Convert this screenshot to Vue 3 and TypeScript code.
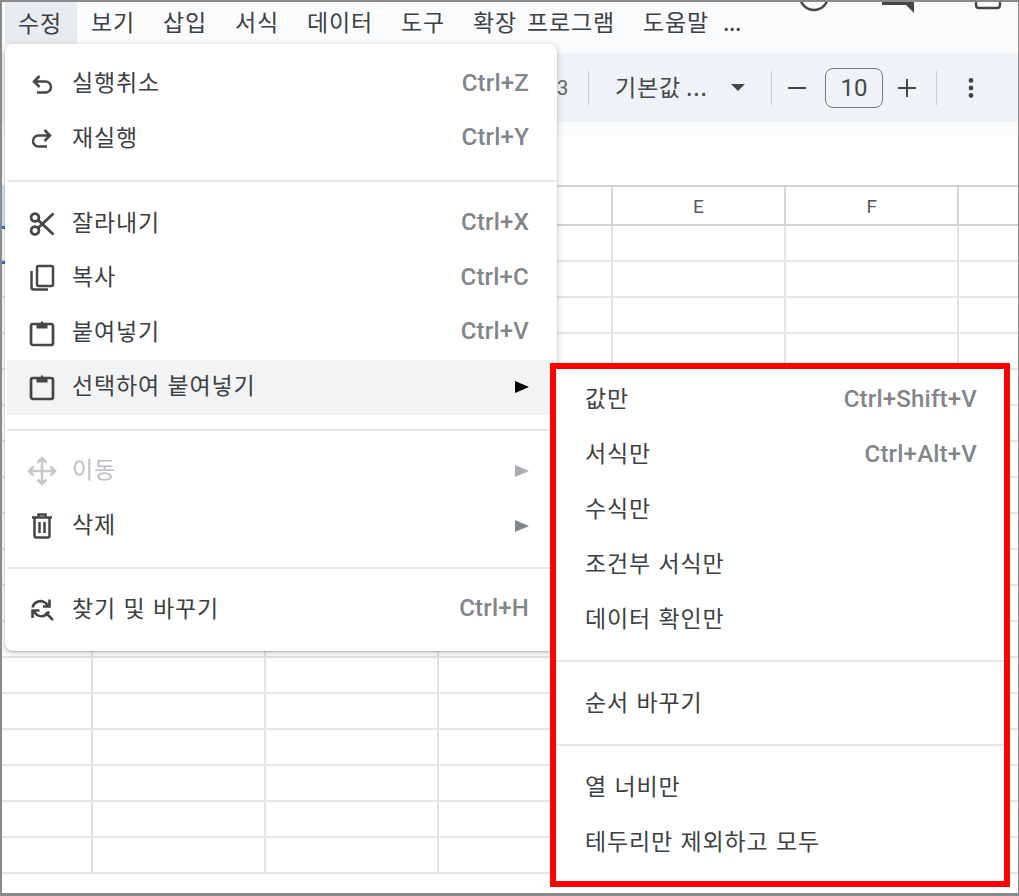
<script setup lang="ts">
interface Item { label?: string; key?: string; icon?: string; arrow?: boolean; disabled?: boolean; active?: boolean; sep?: boolean; tight?: boolean }

const menus: string[] = ['보기', '삽입', '서식', '데이터', '도구', '확장 프로그램', '도움말', '...']
// Columns B to D sit under the open menu, so only E and F are visible.
const columns: string[] = ['', '', '', 'E', 'F']
const rowCount = 18

const items: Item[] = [
  { label: '실행취소', key: 'Ctrl+Z', icon: 'undo' },
  { label: '재실행', key: 'Ctrl+Y', icon: 'redo' },
  { sep: true },
  { label: '잘라내기', key: 'Ctrl+X', icon: 'cut' },
  { label: '복사', key: 'Ctrl+C', icon: 'copy' },
  { label: '붙여넣기', key: 'Ctrl+V', icon: 'paste' },
  { label: '선택하여 붙여넣기', icon: 'paste', arrow: true, active: true },
  { sep: true, tight: true },
  { label: '이동', icon: 'move', arrow: true, disabled: true },
  { label: '삭제', icon: 'trash', arrow: true },
  { sep: true },
  { label: '찾기 및 바꾸기', key: 'Ctrl+H', icon: 'find' },
]

const subItems: Item[] = [
  { label: '값만', key: 'Ctrl+Shift+V' },
  { label: '서식만', key: 'Ctrl+Alt+V' },
  { label: '수식만' },
  { label: '조건부 서식만' },
  { label: '데이터 확인만' },
  { sep: true },
  { label: '순서 바꾸기' },
  { sep: true },
  { label: '열 너비만' },
  { label: '테두리만 제외하고 모두' },
]
</script>

<template>
  <div class="frame">
    <div class="top-icons">
      <svg class="ti ti-a" width="34" height="14" viewBox="0 0 34 14"><circle cx="17" cy="-6" r="14" fill="none" stroke="#444746" stroke-width="2.4" /></svg>
      <svg class="ti ti-b" width="36" height="14" viewBox="0 0 36 14"><path d="M2 0V3H26L34 11V0" fill="#444746" /></svg>
      <svg class="ti ti-c" width="30" height="14" viewBox="0 0 30 14"><path d="M2 0V3Q2 6 5 6H23Q26 6 26 3V0" fill="none" stroke="#444746" stroke-width="2.4" /></svg>
    </div>

    <nav class="menubar">
      <span class="mb-item mb-open">수정</span>
      <span v-for="m in menus" :key="m" class="mb-item">{{ m }}</span>
    </nav>

    <div class="toolbar-wrap">
      <div class="toolbar">
        <span class="tb-num">3</span>
        <i class="tb-sep"></i>
        <span class="tb-font">기본값 ...</span>
        <svg class="tb-caret" width="14" height="7" viewBox="0 0 14 7"><path d="M0 0H14L7 7Z" fill="#444746" /></svg>
        <i class="tb-sep"></i>
        <svg class="tb-minus" width="18" height="18" viewBox="0 0 18 18"><path d="M0 9H18" stroke="#444746" stroke-width="2" /></svg>
        <span class="tb-size">10</span>
        <svg class="tb-plus" width="18" height="18" viewBox="0 0 18 18"><path d="M0 9H18M9 0V18" stroke="#444746" stroke-width="2" /></svg>
        <i class="tb-sep"></i>
        <svg class="tb-more" width="6" height="22" viewBox="0 0 6 22"><circle cx="3" cy="3.5" r="2.4" fill="#444746" /><circle cx="3" cy="11" r="2.4" fill="#444746" /><circle cx="3" cy="18.5" r="2.4" fill="#444746" /></svg>
      </div>
    </div>

    <div class="formula-strip"></div>
    <div class="formula"></div>

    <div class="grid">
      <div class="head-row">
        <div class="corner"></div>
        <div v-for="(c, i) in columns" :key="i" class="head-cell">{{ c }}</div>
        <div class="tail"></div>
      </div>
      <div v-for="r in rowCount" :key="r" class="row">
        <div class="corner"></div>
        <div v-for="(c, i) in columns" :key="i" class="cell"></div>
        <div class="tail"></div>
      </div>
    </div>

    <i class="selection"></i>
    <i class="sel-dot sel-dot-1"></i>
    <i class="sel-dot sel-dot-2"></i>

    <div class="menu">
      <template v-for="(it, i) in items" :key="i">
        <div v-if="it.sep" class="sep" :class="{ tight: it.tight }"></div>
        <div v-else class="item" :class="{ active: it.active, disabled: it.disabled }">
          <span class="icon">
            <svg v-if="it.icon === 'undo'" width="22" height="21" viewBox="0 0 22 21"><path d="M8.500 2 3 7.500 8.500 13M3.500 7.500H14.500a5.400 5.400 0 0 1 0 11H6" fill="none" stroke="currentColor" stroke-width="2.500" /></svg>
            <svg v-else-if="it.icon === 'redo'" width="22" height="21" viewBox="0 0 22 21"><path d="M13.500 2 19 7.500 13.500 13M18.500 7.500H7.500a5.400 5.400 0 0 0 0 11H16" fill="none" stroke="currentColor" stroke-width="2.500" /></svg>
            <svg v-else-if="it.icon === 'cut'" width="26" height="26" viewBox="0 0 26 26"><circle cx="6" cy="6.500" r="3.900" fill="none" stroke="currentColor" stroke-width="2.800" /><circle cx="6" cy="19.500" r="3.900" fill="none" stroke="currentColor" stroke-width="2.800" /><path d="M9 9 24.500 23.500M9 17 24.500 2.500" fill="none" stroke="currentColor" stroke-width="2.800" /></svg>
            <svg v-else-if="it.icon === 'copy'" width="26" height="28" viewBox="0 0 26 28"><rect x="8" y="2" width="16" height="20" rx="1.500" fill="none" stroke="currentColor" stroke-width="2.500" /><path d="M2.500 7v16.500A2 2 0 0 0 4.500 25.500H19" fill="none" stroke="currentColor" stroke-width="2.500" /></svg>
            <svg v-else-if="it.icon === 'paste'" width="26" height="28" viewBox="0 0 26 28"><rect x="2" y="5" width="22" height="21" rx="2" fill="none" stroke="currentColor" stroke-width="2.700" /><path d="M7.500 9.500V5h3.500l2-3.500 2 3.500h3.500v4.500Z" fill="currentColor" /></svg>
            <svg v-else-if="it.icon === 'move'" width="32" height="32" viewBox="0 0 32 32"><path d="M16 3v26M3 16h26M11.500 7.500 16 3l4.500 4.500M11.500 24.500 16 29l4.500-4.500M7.500 11.500 3 16l4.500 4.500M24.500 11.500 29 16l-4.500 4.500" fill="none" stroke="currentColor" stroke-width="2.600" /></svg>
            <svg v-else-if="it.icon === 'trash'" width="22" height="26" viewBox="0 0 22 26"><path d="M1 4.500H21M7.500 4.500V1.500h7v3M3.500 4.500V22.500Q3.500 24.500 5.500 24.500H16.500Q18.500 24.500 18.500 22.500V4.500M8.500 9V20M13.500 9V20" fill="none" stroke="currentColor" stroke-width="2.500" /></svg>
            <svg v-else-if="it.icon === 'find'" width="25" height="25" viewBox="0 0 25 25"><path d="M2.500 10.500C4 5 10 2.500 15 5.500L19 9M19.500 2.500V9.500H13M19 14.500C17 19 11 20.500 7 18L3 14M2.500 21V13.500H9.500M15.500 15.500 23 23" fill="none" stroke="currentColor" stroke-width="2.600" /></svg>
          </span>
          <span class="label">{{ it.label }}</span>
          <span v-if="it.key" class="key">{{ it.key }}</span>
          <span v-if="it.arrow" class="arrow"></span>
        </div>
      </template>
    </div>

    <div class="submenu">
      <template v-for="(it, i) in subItems" :key="i">
        <div v-if="it.sep" class="sub-sep"></div>
        <div v-else class="sub-item">
          <span class="label">{{ it.label }}</span>
          <span v-if="it.key" class="key">{{ it.key }}</span>
        </div>
      </template>
    </div>
  </div>
</template>

<style scoped>
.frame {
  position: relative;
  box-sizing: border-box;
  width: 1019px;
  height: 896px;
  overflow: hidden;
  background: #fff;
  border: 2px solid #8a8a8a;
  border-right-width: 1px;
  border-bottom-width: 3px;
  font-family: "Noto Sans CJK KR", "Liberation Sans", sans-serif;
  color: #3c4043;
}

.top-icons { position: absolute; top: 0; left: 0; width: 100%; height: 14px; }
.ti { position: absolute; top: 0; }
.ti-a { left: 795px; }
.ti-b { left: 878px; }
.ti-c { left: 972px; }

.menubar {
  display: flex;
  align-items: center;
  height: 42px;
  padding-left: 3px;
  background: #f9fbfd;
  font-size: 23px;
  letter-spacing: 0.84px;
  word-spacing: 4px;
  color: #3c4043;
}
.mb-item { display: flex; align-items: center; height: 100%; padding: 0 14px 4px; white-space: nowrap; }
.mb-item:last-child { margin-left: -14px; letter-spacing: -0.4px; }
.mb-open { background: #e9ecef; padding: 2px 15px 4px 13px; box-sizing: border-box; }

.toolbar-wrap { height: 78px; background: #f9fbfd; padding-top: 9px; box-sizing: border-box; }
.toolbar {
  display: flex;
  align-items: center;
  height: 69px;
  padding-left: 555px;
  background: #eff3f8;
  color: #444746;
  box-sizing: border-box;
}
.tb-num { font: 20px "Roboto", sans-serif; color: #5f6368; width: 12px; margin-right: 19px; }
.tb-sep { width: 1px; height: 34px; background: #c7cbd0; flex: none; }
.tb-font { font-size: 23px; letter-spacing: 0.84px; word-spacing: -1px; margin-left: 26px; width: 104px; white-space: nowrap; margin-top: -4px; }
.tb-caret { margin-left: 12px; margin-right: 26px; }
.tb-minus { margin-left: 16px; }
.tb-size {
  box-sizing: border-box;
  width: 58px;
  height: 40px;
  margin-left: 19px;
  border: 1.500px solid #747775;
  border-radius: 8px;
  display: flex;
  align-items: center;
  justify-content: center;
  font: 24px "Roboto", sans-serif;
}
.tb-plus { margin-left: 15px; margin-right: 20px; }
.tb-more { margin-left: 31px; }

.formula-strip { height: 14px; background: #f9fbfd; }
.formula { height: 49px; background: #fff; }

.grid { display: flex; flex-direction: column; }
.head-row, .row { display: flex; }
.head-row { height: 41px; border-top: 2px solid #d0d2d4; border-bottom: 2px solid #d0d2d4; box-sizing: border-box; }
.row { height: 36px; border-bottom: 2px solid #e4e5e6; box-sizing: border-box; }
.corner { width: 88.500px; flex: none; border-right: 2px solid #e0e1e2; }
.head-cell, .cell { width: 171.400px; flex: none; border-right: 2px solid #e2e3e4; }
.head-cell {
  display: flex;
  align-items: center;
  justify-content: center;
  padding-top: 1px;
  box-sizing: content-box;
  font: 400 19px "Roboto", sans-serif;
  color: #555a5e;
  border-right-color: #d6d7d8;
}
.tail { flex: 1; }

.selection { position: absolute; left: 0; top: 183px; width: 3px; height: 41px; background: #d3e3fd; }
.sel-dot { position: absolute; left: 0; width: 3px; height: 3px; background: #1a73e8; }
.sel-dot-1 { top: 224px; }
.sel-dot-2 { top: 259px; }

.menu {
  position: absolute;
  left: 3px;
  top: 42px;
  box-sizing: border-box;
  width: 552px;
  height: 607px;
  padding-top: 13px;
  background: #fff;
  border-radius: 8px;
  box-shadow: 0 2px 6px 2px rgba(60, 64, 67, 0.15), 0 1px 2px rgba(60, 64, 67, 0.3);
}
.item {
  display: flex;
  align-items: center;
  height: 54.500px;
  margin-left: 2px;
  padding: 0 28px 0 0;
  font-size: 23px;
  letter-spacing: 0.84px;
  word-spacing: 1.5px;
  color: #3c4043;
}
.item.active { background: #f1f3f4; }
.item.disabled { color: #bdc1c6; }
.icon { width: 65px; flex: none; display: flex; justify-content: center; padding-left: 5px; box-sizing: border-box; color: #444746; }
.disabled .icon { color: #c6c8ca; }
.label { white-space: pre; flex: 1; margin-top: -6px; }
.key {
  font: 500 24px "Roboto", sans-serif;
  letter-spacing: 0.2px;
  word-spacing: 0;
  color: #80868b;
  white-space: nowrap;
  margin-top: -3px;
}
.arrow {
  width: 0;
  height: 0;
  border-left: 14px solid #80868b;
  border-top: 6px solid transparent;
  border-bottom: 6px solid transparent;
}
.active .arrow { border-left-color: #000; }
.disabled .arrow { border-left-color: #a9adb2; }
.sep { height: 2px; margin: 14px 0 14.500px 2px; background: #e4e6e8; }
.sep.tight { margin: 14px 0 13.500px 2px; }
.sep:nth-last-child(2) { margin: 14px 0 13.500px 2px; }

.submenu {
  position: absolute;
  left: 548px;
  top: 361px;
  box-sizing: border-box;
  width: 460px;
  height: 524px;
  padding-top: 3.500px;
  background: #fff;
  border: 6px solid #ff0000;
}
.sub-item {
  display: flex;
  align-items: center;
  height: 55px;
  padding: 0 27px 0 29px;
  font-size: 23px;
  letter-spacing: 0.84px;
  word-spacing: 1.5px;
  color: #3c4043;
}
.sub-sep { height: 2px; margin: 12px 0 15px; background: #e4e6e8; }
</style>
